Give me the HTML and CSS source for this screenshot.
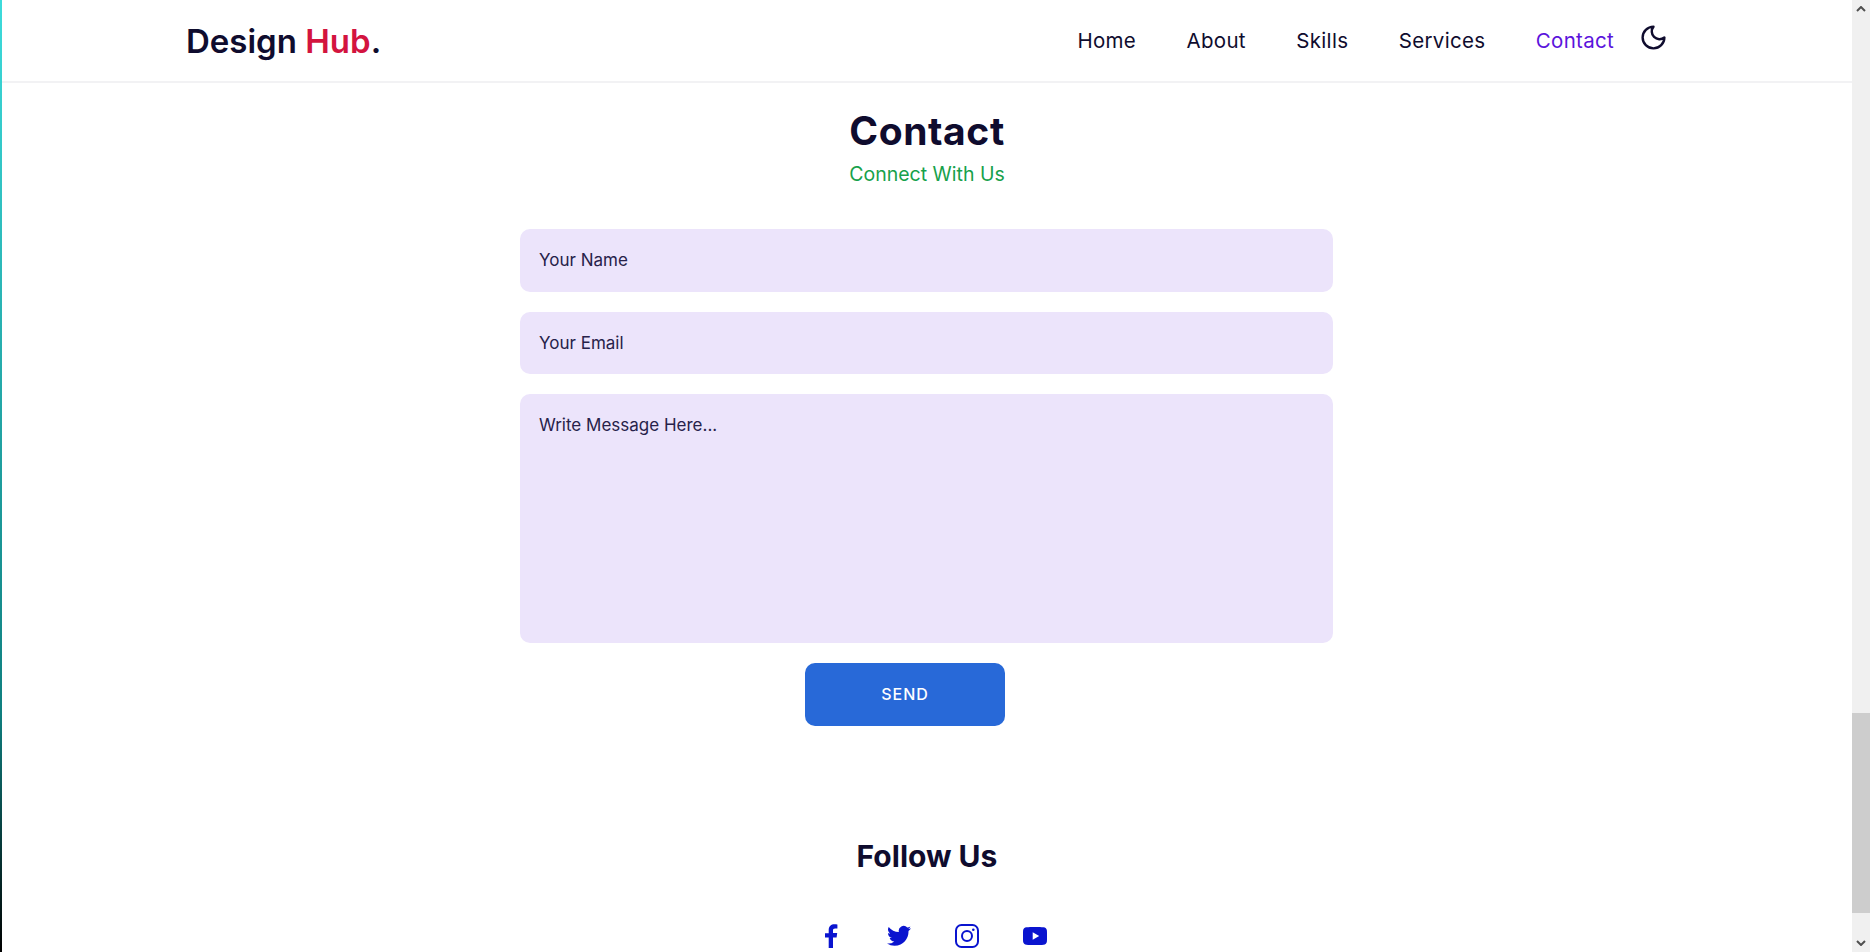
FILE: index.html
```html
<!DOCTYPE html>
<html lang="en">
<head>
    <meta charset="UTF-8">
    <meta name="viewport" content="width=device-width, initial-scale=1.0">
    <title>Design Hub</title>
    <link rel="stylesheet" href="styles.css">
</head>
<body>
    <div class="edge-strip"></div>
    <div class="page">
        <header class="header">
            <a href="#" class="logo">Design <span class="logo-accent">Hub</span>.</a>
            <nav class="nav">
                <a href="#" class="nav-link">Home</a>
                <a href="#" class="nav-link">About</a>
                <a href="#" class="nav-link">Skills</a>
                <a href="#" class="nav-link">Services</a>
                <a href="#" class="nav-link active">Contact</a>
            </nav>
            <svg class="theme-icon" viewBox="0 0 24 24" fill="none" stroke="currentColor" stroke-width="2" stroke-linejoin="round">
                <path d="M12 3a6.4 6.4 0 0 0 9 9 9 9 0 1 1-9-9Z"/>
            </svg>
        </header>
        <main class="contact">
            <h2 class="title">Contact</h2>
            <p class="subtitle">Connect With Us</p>
            <form class="contact-form">
                <input class="field" type="text" placeholder="Your Name">
                <input class="field" type="email" placeholder="Your Email">
                <textarea class="field message" placeholder="Write Message Here..."></textarea>
                <button class="send" type="button">SEND</button>
            </form>
            <h3 class="follow">Follow Us</h3>
            <div class="socials">
                <a href="#" class="social" aria-label="Facebook">
                    <svg viewBox="0 0 24 24" fill="currentColor"><path d="M14 24V13.4h3.6l.6-4.300H14V6.500c0-1.200.4-2.100 2.100-2.100h2.300V.5C18 .4 16.700.3 15.400.3 12.200.3 9.700 2.300 9.700 6v3.300H6v4.100h3.700V24Z"/></svg>
                </a>
                <a href="#" class="social" aria-label="Twitter">
                    <svg viewBox="0 0 24 24" fill="currentColor"><path d="M24 4.300a9.800 9.800 0 0 1-2.800.8 4.900 4.900 0 0 0 2.200-2.700 9.900 9.900 0 0 1-3.100 1.200 4.900 4.900 0 0 0-8.400 4.500A14 14 0 0 1 1.700 3a4.900 4.900 0 0 0 1.500 6.600 4.900 4.900 0 0 1-2.200-.6v.1a4.900 4.900 0 0 0 3.900 4.800 4.900 4.900 0 0 1-2.200.1 4.900 4.900 0 0 0 4.600 3.400A9.900 9.900 0 0 1 0 19.500 14 14 0 0 0 7.500 21.700c9.100 0 14-7.500 14-14v-.6a10 10 0 0 0 2.500-2.800Z"/></svg>
                </a>
                <a href="#" class="social" aria-label="Instagram">
                    <svg viewBox="0 0 24 24" fill="none" stroke="currentColor" stroke-width="2"><rect x="1" y="1" width="22" height="22" rx="5.500"/><circle cx="12" cy="12" r="5"/><circle cx="18.300" cy="5.700" r="1.300" fill="currentColor" stroke="none"/></svg>
                </a>
                <a href="#" class="social" aria-label="YouTube">
                    <svg viewBox="0 0 24 24" fill="currentColor"><path fill-rule="evenodd" d="M3.500 3.200C7 2.800 17 2.800 20.500 3.200 22.500 3.400 23.700 4.500 23.900 6.500c.2 3.200.2 7.800 0 11-.2 2-1.400 3.100-3.400 3.300-3.500.4-13.500.4-17 0C1.500 20.600.3 19.500.1 17.500c-.2-3.200-.2-7.800 0-11C.3 4.500 1.500 3.400 3.500 3.200ZM9.700 8.200v7.600l6.500-3.800Z"/></svg>
                </a>
            </div>
        </main>
    </div>
    <div class="scrollbar">
        <svg class="arrow" viewBox="0 0 10 6" fill="none" stroke="currentColor" stroke-width="2"><path d="M1 5l4-4 4 4"/></svg>
        <div class="scroll-track"><div class="scroll-thumb"></div></div>
        <svg class="arrow" viewBox="0 0 10 6" fill="none" stroke="currentColor" stroke-width="2"><path d="M1 1l4 4 4-4"/></svg>
    </div>
</body>
</html>
```
FILE: styles.css
```css
:root {
    --ink: #0f0c2e;
    --purple: #5b13dc;
    --field: #ece4fb;
    --blue: #0a14cf;
}

* {
    margin: 0;
    padding: 0;
    box-sizing: border-box;
}

body {
    display: flex;
    height: 100vh;
    overflow: hidden;
    background: #fff;
    color: var(--ink);
    font-family: 'Inter', 'Liberation Sans', sans-serif;
}

.edge-strip {
    width: 2px;
    background: linear-gradient(#3ddbdb, #0f7f7f 75%, #000);
}

.page {
    flex: 1;
    min-width: 0;
}

.header {
    display: flex;
    align-items: center;
    height: 83px;
    padding: 0 184px;
    border-bottom: 2px solid #f2f2f4;
}

.logo {
    font-size: 33px;
    font-weight: 600;
    color: var(--ink);
    text-decoration: none;
}

.logo-accent {
    color: #d3143f;
}

.nav {
    display: flex;
    gap: 50.5px;
    margin-left: auto;
}

.nav-link {
    font-size: 20.5px;
    letter-spacing: 0.3px;
    color: var(--ink);
    text-decoration: none;
}

.nav-link.active {
    color: var(--purple);
}

.theme-icon {
    width: 29px;
    height: 29px;
    margin: -6px 0 0 25px;
}

.contact {
    display: flex;
    flex-direction: column;
    align-items: center;
}

.title {
    margin-top: 26px;
    font-size: 39px;
    line-height: 44px;
    font-weight: 700;
    letter-spacing: 0.6px;
}

.subtitle {
    margin-top: 8px;
    font-size: 19.5px;
    line-height: 26px;
    color: #17a14b;
}

.contact-form {
    display: flex;
    flex-direction: column;
    align-items: flex-start;
    gap: 20px;
    width: 813px;
    margin: 42px 1px 0 0;
}

.field {
    display: block;
    width: 100%;
    height: 62.5px;
    padding: 0 19px;
    border: 0;
    border-radius: 10px;
    background: var(--field);
    color: var(--ink);
    font: 17px 'Inter', 'Liberation Sans', sans-serif;
    resize: none;
}

.field::placeholder {
    color: #27224a;
    opacity: 1;
}

.message {
    height: 249px;
    padding-top: 21px;
}

.send {
    width: 200px;
    height: 62.5px;
    margin-left: 285px;
    border: 0;
    border-radius: 10px;
    background: #2869d8;
    color: #fff;
    font: 500 16px 'Inter', 'Liberation Sans', sans-serif;
    letter-spacing: 1px;
}

.follow {
    margin-top: 110px;
    font-size: 30px;
    line-height: 40px;
    font-weight: 700;
}

.socials {
    display: flex;
    gap: 44px;
    margin: 48px 0 0 11px;
}

.social {
    display: block;
    width: 24px;
    height: 24px;
    color: var(--blue);
}

.social svg {
    display: block;
    width: 24px;
    height: 24px;
}

.scrollbar {
    display: flex;
    flex-direction: column;
    width: 18px;
    background: #f0f0f0;
    color: #505050;
}

.arrow {
    width: 10px;
    height: 6px;
    margin: 6px auto;
}

.scroll-track {
    flex: 1;
    display: flex;
    flex-direction: column;
    justify-content: flex-end;
    padding-bottom: 21px;
}

.scroll-thumb {
    height: 200px;
    background: #cdcdcd;
}
```
